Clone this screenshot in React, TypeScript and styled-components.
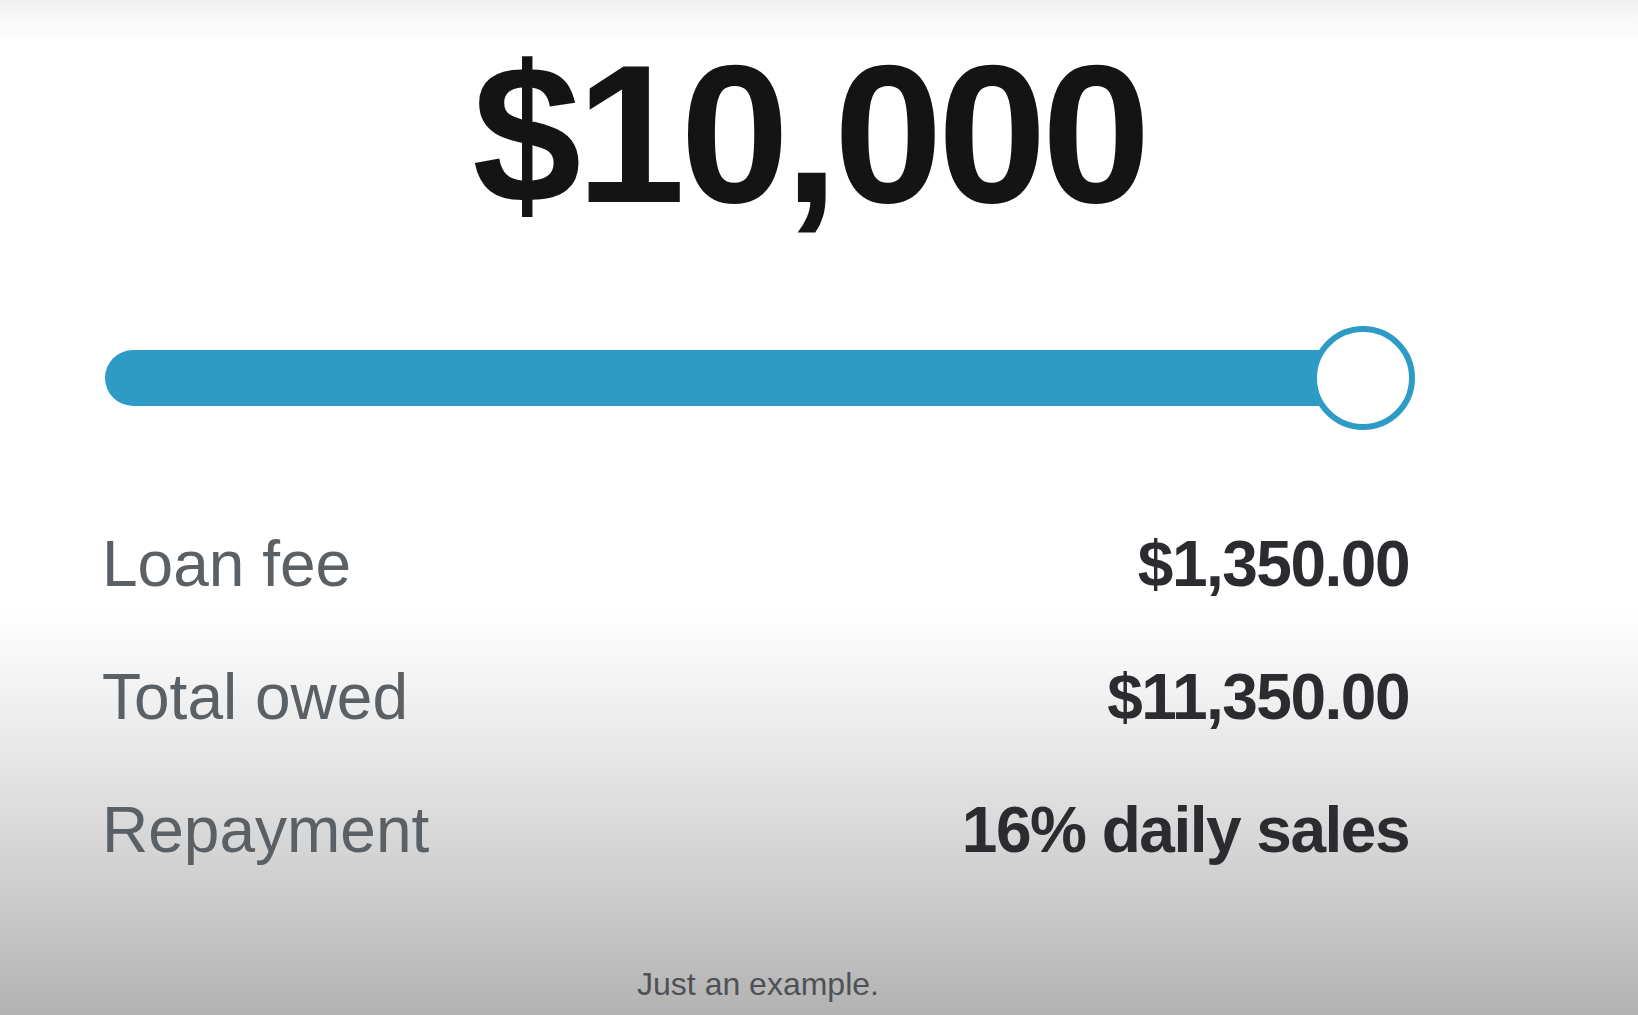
import * as React from 'react';
import styled, { createGlobalStyle } from 'styled-components';

const GlobalStyle = createGlobalStyle`
  html, body {
    margin: 0;
    padding: 0;
    overflow: hidden;
  }
  body {
    font-family: "Liberation Sans", Arial, sans-serif;
  }
`;

const Page = styled.div`
  display: flex;
  flex-direction: column;
  width: 1638px;
  height: 1015px;
  box-sizing: border-box;
  padding-top: 37px;
  background: linear-gradient(
    to bottom,
    #f0f0f0 0px,
    #f9f9f9 20px,
    #fcfcfc 36px,
    #ffffff 38px,
    #ffffff 610px,
    #e6e6e6 760px,
    #cfcfcf 880px,
    #b2b2b2 1015px
  );
`;

const Amount = styled.div`
  display: flex;
  justify-content: center;
  padding-right: 20px;
  font-size: 196px;
  line-height: 196px;
  height: 196px;
  font-weight: 700;
  letter-spacing: -5px;
  color: #141414;
`;

const SliderRow = styled.div`
  display: flex;
  align-items: center;
  margin-top: 93px;
  padding: 0 223px 0 105px;
  height: 104px;
`;

const Track = styled.div`
  flex: 1;
  height: 56px;
  border-radius: 28px 0 0 28px;
  background: #2e9bc6;
`;

const Thumb = styled.div`
  flex: none;
  width: 104px;
  height: 104px;
  margin-left: -52px;
  box-sizing: border-box;
  border-radius: 50%;
  border: 6px solid #2e9bc6;
  background: #ffffff;
`;

const Details = styled.div`
  display: flex;
  flex-direction: column;
  margin-top: 68px;
  padding: 0 229px 0 102px;
`;

const Row = styled.div`
  display: flex;
  justify-content: space-between;
  align-items: baseline;
  height: 133px;
  line-height: 133px;
`;

const Label = styled.span`
  font-size: 64px;
  font-weight: 400;
  color: #5b6065;
`;

const Value = styled.span`
  font-size: 64px;
  font-weight: 700;
  letter-spacing: -1.5px;
  color: #2a2c2f;
`;

const Caption = styled.div`
  margin-top: 67px;
  padding-right: 122px;
  text-align: center;
  font-size: 32px;
  line-height: 40px;
  color: #4e5256;
`;

const rows = [
  { label: 'Loan fee', value: '$1,350.00' },
  { label: 'Total owed', value: '$11,350.00' },
  { label: 'Repayment', value: '16% daily sales' },
];

const App: React.FunctionComponent = () => {
  return (
    <Page>
      <GlobalStyle />
      <Amount>$10,000</Amount>

      <SliderRow>
        <Track />
        <Thumb />
      </SliderRow>

      <Details>
        {rows.map((r) => (
          <Row key={r.label}>
            <Label>{r.label}</Label>
            <Value>{r.value}</Value>
          </Row>
        ))}
      </Details>

      <Caption>Just an example.</Caption>
    </Page>
  );
};

export default App;
